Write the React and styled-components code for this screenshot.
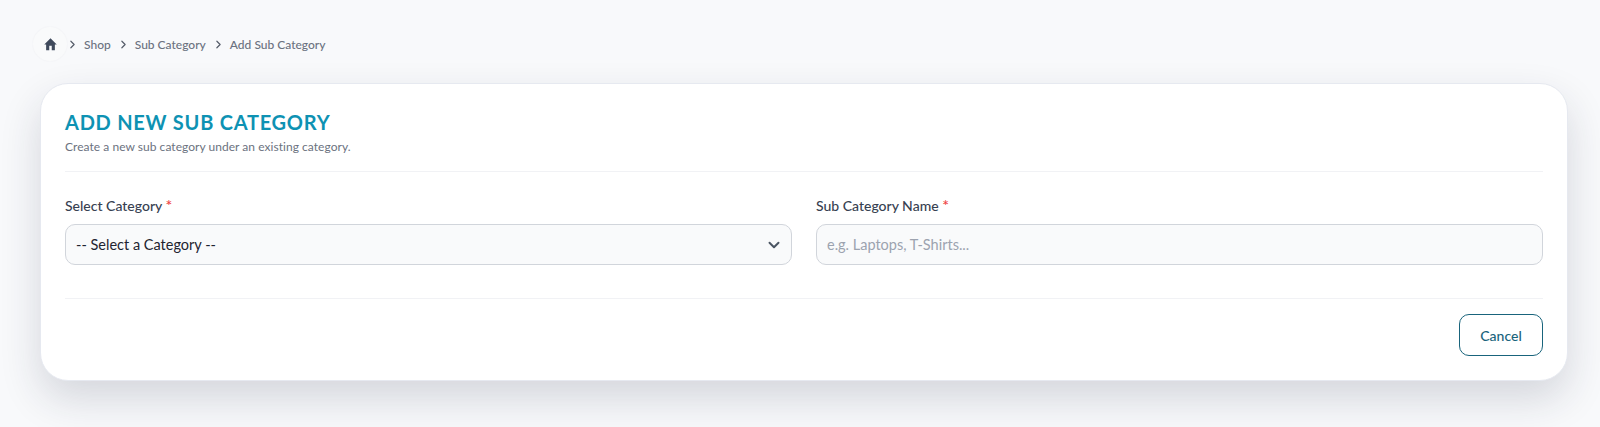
import React from 'react';
import styled, { createGlobalStyle } from 'styled-components';
import { ChevronRight, ChevronDown } from 'lucide-react';

const GlobalStyle = createGlobalStyle`
  html, body {
    margin: 0;
    padding: 0;
    background-color: #f8f9fb;
    font-family: "Lato", "Noto Sans", sans-serif;
  }
  * {
    box-sizing: border-box;
  }
`;

const Page = styled.div`
  height: 427px;
  overflow: hidden;
  padding: 27px 32px 0 40px;
  background-color: #f8f9fb;
`;

const Breadcrumb = styled.nav`
  display: flex;
  align-items: center;
  height: 34px;
  margin-left: -7px;
  margin-bottom: 22px;
`;

const HomeButton = styled.span`
  display: flex;
  align-items: center;
  justify-content: center;
  width: 34px;
  height: 34px;
  border-radius: 50%;
  background-color: #f9fafb;
  box-shadow: 0 0 2px rgba(60, 70, 90, 0.06);
  margin-right: -1px;
`;

const Crumb = styled.span`
  display: flex;
  align-items: center;
  font-size: 12px;
  font-weight: 500;
  color: #6b7280;
  margin-right: 6px;

  svg {
    margin-right: 5px;
    color: #555c69;
  }
`;

const Card = styled.section`
  height: 298px;
  padding: 24px;
  background-color: #fff;
  border: 1px solid #e6e9f0;
  border-radius: 28px;
  box-shadow: 0 18px 40px rgba(30, 40, 60, 0.16);
`;

const CardHeader = styled.header`
  height: 64px;
  border-bottom: 1px solid #f1f2f5;
`;

const Title = styled.h1`
  margin: 0;
  padding-top: 1px;
  font-size: 20px;
  line-height: 26px;
  font-weight: 700;
  letter-spacing: 0.75px;
  color: #0e92b3;
`;

const Subtitle = styled.p`
  margin: 4px 0 0;
  font-size: 12px;
  line-height: 16px;
  letter-spacing: 0.04px;
  color: #6b7280;
`;

const FormGrid = styled.div`
  display: grid;
  grid-template-columns: 1fr 1fr;
  column-gap: 24px;
  padding-top: 25px;
  padding-bottom: 33px;
  border-bottom: 1px solid #f1f2f5;
`;

const Field = styled.div`
  display: flex;
  flex-direction: column;
`;

const Label = styled.label`
  font-size: 14px;
  line-height: 18px;
  font-weight: 500;
  color: #374151;
  margin-bottom: 9px;
`;

const Required = styled.span`
  font-size: 16px;
  line-height: 0;
  color: #ef4444;
`;

const SelectBox = styled.div`
  display: flex;
  align-items: center;
  justify-content: space-between;
  height: 41px;
  padding: 0 8px 0 10px;
  background-color: #f9fafb;
  border: 1px solid #d1d5db;
  border-radius: 10px;
  font-size: 14.5px;
  color: #1f2430;

  svg {
    color: #4b5563;
  }
`;

const Input = styled.input`
  height: 41px;
  padding: 0 10px;
  background-color: #f9fafb;
  border: 1px solid #d1d5db;
  border-radius: 10px;
  font-family: inherit;
  font-size: 14.5px;
  color: #1f2430;

  &::placeholder {
    color: #9ca3af;
    opacity: 1;
  }
`;

const Footer = styled.footer`
  display: flex;
  justify-content: flex-end;
  padding-top: 15px;
`;

const CancelButton = styled.button`
  width: 84px;
  height: 42px;
  background-color: #fff;
  border: 1px solid #19647c;
  border-radius: 10px;
  font-family: inherit;
  font-size: 14px;
  font-weight: 500;
  color: #19647c;
  cursor: pointer;
`;

const HomeIcon = () => (
  <svg width="15" height="15" viewBox="0 0 24 24" fill="#3f4a5c">
    <path d="M10 21v-7h4v7h5v-9h3L12 2 2 12h3v9z" />
  </svg>
);

const crumbs = ['Shop', 'Sub Category', 'Add Sub Category'];

export default function App() {
  return (
    <>
      <GlobalStyle />
      <Page>
        <Breadcrumb>
          <HomeButton>
            <HomeIcon />
          </HomeButton>
          {crumbs.map((crumb) => (
            <Crumb key={crumb}>
              <ChevronRight size={13} strokeWidth={2.2} />
              {crumb}
            </Crumb>
          ))}
        </Breadcrumb>
        <Card>
          <CardHeader>
            <Title>ADD NEW SUB CATEGORY</Title>
            <Subtitle>Create a new sub category under an existing category.</Subtitle>
          </CardHeader>
          <FormGrid>
            <Field>
              <Label>
                Select Category <Required>*</Required>
              </Label>
              <SelectBox>
                -- Select a Category --
                <ChevronDown size={18} strokeWidth={2.6} />
              </SelectBox>
            </Field>
            <Field>
              <Label>
                Sub Category Name <Required>*</Required>
              </Label>
              <Input placeholder="e.g. Laptops, T-Shirts..." />
            </Field>
          </FormGrid>
          <Footer>
            <CancelButton>Cancel</CancelButton>
          </Footer>
        </Card>
      </Page>
    </>
  );
}
